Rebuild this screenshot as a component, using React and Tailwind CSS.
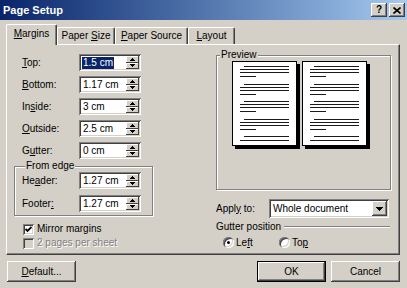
import React from "react";

const RAISED = "shadow-[inset_-1px_-1px_#404040,inset_1px_1px_#ffffff,inset_-2px_-2px_#808080,inset_2px_2px_#d4d0c8]";
const RAISED_THIN = "shadow-[inset_-1px_-1px_#404040,inset_1px_1px_#ffffff]";
const SUNKEN = "shadow-[inset_1px_1px_#808080,inset_-1px_-1px_#ffffff,inset_2px_2px_#404040,inset_-2px_-2px_#d4d0c8]";
const ETCHED = "border border-[#808080] shadow-[1px_1px_0_#ffffff,inset_1px_1px_0_#ffffff]";

function U({ children }) {
  return <span className="underline underline-offset-[1px]">{children}</span>;
}

function Tri({ up }) {
  return (
    <svg width="5" height="3" viewBox="0 0 5 3" shapeRendering="crispEdges">
      {up ? <polygon points="2.5,0 5,3 0,3" fill="#000" /> : <polygon points="0,0 5,0 2.5,3" fill="#000" />}
    </svg>
  );
}

function Spin({ children, sel }) {
  return (
    <div className={`flex h-[17px] w-[62px] bg-white p-[2px] ${SUNKEN}`}>
      <div className="flex flex-1 items-center pl-[1px]">
        <span className={sel ? "bg-[#0a246a] px-[1px] py-[1px] text-white" : "px-[1px]"}>{children}</span>
      </div>
      <div className="flex w-[13px] flex-col">
        <div className={`flex flex-1 items-center justify-center bg-[#d4d0c8] ${RAISED_THIN}`}>
          <Tri up />
        </div>
        <div className={`flex flex-1 items-center justify-center bg-[#d4d0c8] ${RAISED_THIN}`}>
          <Tri />
        </div>
      </div>
    </div>
  );
}

function Row({ label, value, sel }) {
  return (
    <div className="flex h-[17px] items-center">
      <div className="w-[57px]">{label}</div>
      <Spin sel={sel}>{value}</Spin>
    </div>
  );
}

function Check({ checked, disabled }) {
  return (
    <div className={`flex h-[11px] w-[11px] items-center justify-center ${disabled ? "bg-[#d4d0c8]" : "bg-white"} ${SUNKEN}`}>
      {checked && (
        <svg width="7" height="7" viewBox="0 0 7 7">
          <polyline points="0.5,3 2.5,5 6.5,1" fill="none" stroke="#000" strokeWidth="1.8" />
        </svg>
      )}
    </div>
  );
}

function Radio({ checked }) {
  return (
    <div className={`flex h-[11px] w-[11px] items-center justify-center rounded-full bg-white ${SUNKEN}`}>
      {checked && <div className="h-[3px] w-[3px] rounded-full bg-black" />}
    </div>
  );
}

function Pages() {
  const page = (ox) => {
    const lines = [];
    const paras = [5, 22.5, 40, 57.5];
    const c = "#1a1a1a";
    paras.forEach((p, i) => {
      lines.push(<rect key={`a${i}`} x={ox + 12} y={p} width="45" height="1" fill={c} />);
      lines.push(<rect key={`b${i}`} x={ox + 8} y={p + 3} width="49" height="1" fill={c} />);
      lines.push(<rect key={`c${i}`} x={ox + 8} y={p + 6} width="49" height="1" fill={c} />);
      lines.push(<rect key={`d${i}`} x={ox + 8} y={p + 10} width="16" height="1" fill={c} />);
    });
    lines.push(<rect key="e1" x={ox + 12} y={75} width="45" height="1" fill={c} />);
    lines.push(<rect key="e2" x={ox + 8} y={79} width="49" height="1" fill={c} />);
    return (
      <g key={ox}>
        <rect x={ox + 3} y="3" width="65" height="85" fill="#000" />
        <rect x={ox + 0.5} y="0.5" width="64" height="84" fill="#fff" stroke="#000" />
        {lines}
      </g>
    );
  };
  return (
    <svg className="shrink-0" width="139" height="89" viewBox="0 0 139 89" shapeRendering="crispEdges">
      {page(0)}
      {page(70)}
    </svg>
  );
}

function Btn({ children, def, className = "" }) {
  return (
    <div
      className={`flex h-[21px] w-[69px] items-center justify-center bg-[#d4d0c8] ${def ? "border border-black" : ""} ${RAISED} ${className}`}
    >
      {children}
    </div>
  );
}

function TitleBar() {
  return (
    <div className="flex h-[20px] items-center bg-gradient-to-r from-[#0a246a] to-[#a6caf0] pl-[3px] pr-[2px]">
      <div className="flex-1 text-[11px] font-bold text-white">Page Setup</div>
      <div className={`flex h-[14px] w-[16px] items-center justify-center bg-[#d4d0c8] text-[10px] font-bold ${RAISED}`}>?</div>
      <div className={`ml-[2px] flex h-[14px] w-[16px] items-center justify-center bg-[#d4d0c8] ${RAISED}`}>
        <svg width="8" height="7" viewBox="0 0 8 7">
          <path d="M0.5 0.5 L7.5 6.5 M7.5 0.5 L0.5 6.5" stroke="#000" strokeWidth="1.6" />
        </svg>
      </div>
    </div>
  );
}

function Tabs() {
  const tab = "flex h-[17px] items-center justify-center border-l border-t border-r border-l-white border-t-white border-r-[#404040] shadow-[inset_-1px_0_#808080] rounded-t-[2px]";
  return (
    <div className="relative z-10 flex h-[20px] items-end">
      <div className="-mb-[1px] flex h-[21px] w-[51px] items-center justify-center rounded-t-[2px] border-l border-t border-r border-l-white border-t-white border-r-[#404040] bg-[#d4d0c8] pb-[2px] shadow-[inset_-1px_0_#808080]">
        <span><U>M</U>argins</span>
      </div>
      <div className={`${tab} w-[58px]`}>
        <span>Paper <U>S</U>ize</span>
      </div>
      <div className={`${tab} w-[73px]`}>
        <span><U>P</U>aper Source</span>
      </div>
      <div className={`${tab} w-[47px]`}>
        <span><U>L</U>ayout</span>
      </div>
    </div>
  );
}

function Panel() {
  return (
    <div className="flex h-[211px] w-[394px] border border-white border-r-[#404040] border-b-[#404040] shadow-[inset_-1px_-1px_#808080]">
      <div className="flex w-[209px] flex-col pl-[7px] pt-[9px]">
        <div className="flex flex-col gap-[5px] pl-[8px]">
          <Row label={<span><U>T</U>op:</span>} value="1.5 cm" sel />
          <Row label={<span><U>B</U>ottom:</span>} value="1.17 cm" />
          <Row label={<span>In<U>s</U>ide:</span>} value="3 cm" />
          <Row label={<span><U>O</U>utside:</span>} value="2.5 cm" />
          <Row label={<span>G<U>u</U>tter:</span>} value="0 cm" />
        </div>
        <fieldset className={`mt-[1px] w-[139px] pb-[3px] pl-[7px] ${ETCHED}`}>
          <legend className="ml-[3px] bg-[#d4d0c8] px-[1px] leading-[12px]">From edge</legend>
          <div className="flex flex-col gap-[6px]">
            <Row label={<span>He<U>a</U>der:</span>} value="1.27 cm" />
            <Row label={<span>Footer<U>:</U></span>} value="1.27 cm" />
          </div>
        </fieldset>
        <div className="mt-[6px] flex flex-col pl-[9px]">
          <div className="flex h-[14px] items-center gap-[3px]">
            <Check checked />
            <span>Mirror margins</span>
          </div>
          <div className="flex h-[14px] items-center gap-[3px]">
            <Check disabled />
            <span className="text-[#808080] [text-shadow:1px_1px_0_#ffffff]">2 pages per sheet</span>
          </div>
        </div>
      </div>
      <div className="flex w-[183px] flex-col pt-[4px]">
        <fieldset className={`flex h-[141px] w-[175px] items-center justify-center ${ETCHED}`}>
          <legend className="ml-[3px] bg-[#d4d0c8] px-[1px] leading-[12px]">Preview</legend>
          <div className="flex h-full w-full items-center justify-center pb-[8px] pr-[4px]">
            <Pages />
          </div>
        </fieldset>
        <div className="mt-[9px] flex h-[19px] items-center">
          <div className="w-[53px]">Appl<U>y</U> to:</div>
          <div className={`flex h-[19px] w-[120px] bg-white p-[2px] ${SUNKEN}`}>
            <div className="flex flex-1 items-center pl-[2px]">Whole document</div>
            <div className={`flex w-[15px] items-center justify-center bg-[#d4d0c8] ${RAISED}`}>
              <svg width="7" height="4" viewBox="0 0 7 4" shapeRendering="crispEdges">
                <polygon points="0,0 7,0 3.5,4" fill="#000" />
              </svg>
            </div>
          </div>
        </div>
        <div className="mt-[3px] flex h-[12px] items-center">
          <span>Gutter position</span>
          <div className="ml-[3px] mr-[9px] h-[2px] flex-1 border-t border-b border-t-[#808080] border-b-white" />
        </div>
        <div className="mt-[3px] flex h-[13px] items-center pl-[7px]">
          <div className="flex w-[56px] items-center gap-[2px]">
            <Radio checked />
            <span>Le<U>f</U>t</span>
          </div>
          <div className="flex items-center gap-[2px]">
            <Radio />
            <span>To<U>p</U></span>
          </div>
        </div>
      </div>
    </div>
  );
}

export default function App() {
  return (
    <div className="h-[288px] w-[407px] overflow-hidden bg-[#d4d0c8] font-['Liberation_Sans',Arial,sans-serif] text-[10px] leading-none text-black">
      <TitleBar />
      <div className="pl-[6px] pt-[4px]">
        <Tabs />
        <Panel />
        <div className="mt-[6px] flex w-[394px]">
          <Btn className="ml-[1px]"><span><U>D</U>efault...</span></Btn>
          <div className="flex-1" />
          <Btn def>OK</Btn>
          <Btn className="ml-[5px]">Cancel</Btn>
        </div>
      </div>
    </div>
  );
}
